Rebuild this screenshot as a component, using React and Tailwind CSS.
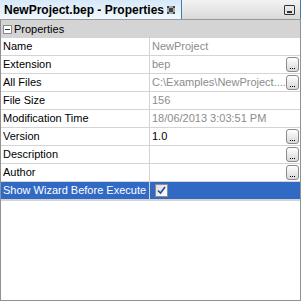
import React from 'react';

const rows = [
  { label: 'Name', value: 'NewProject', muted: true },
  { label: 'Extension', value: 'bep', muted: true, button: true },
  { label: 'All Files', value: 'C:\\Examples\\NewProject....', muted: true, button: true },
  { label: 'File Size', value: '156', muted: true },
  { label: 'Modification Time', value: '18/06/2013 3:03:51 PM', muted: true },
  { label: 'Version', value: '1.0', button: true },
  { label: 'Description', value: '', button: true },
  { label: 'Author', value: '', button: true },
  { label: 'Show Wizard Before Execute', check: true, selected: true },
];

const font = { fontFamily: "'Liberation Sans', Arial, sans-serif" };

function EllipsisButton() {
  return (
    <div className="w-[13px] h-[15px] rounded-[3px] border border-[#8a8a8a] bg-gradient-to-b from-white to-[#d8d8d8] flex items-end justify-center pb-[2px] shrink-0">
      <div className="flex gap-[1px]">
        <span className="w-[1px] h-[1px] bg-black" />
        <span className="w-[1px] h-[1px] bg-black" />
        <span className="w-[1px] h-[1px] bg-black" />
      </div>
    </div>
  );
}

function CheckBox() {
  return (
    <div className="w-[13px] h-[13px] border border-[#8d8d8d] bg-gradient-to-br from-[#dcdcdc] to-white flex items-center justify-center">
      <svg width="9" height="9" viewBox="0 0 9 9">
        <path d="M1 4.5 L3.5 7 L8 1" fill="none" stroke="#2547a8" strokeWidth="1.6" />
      </svg>
    </div>
  );
}

export default function App() {
  return (
    <div className="w-[301px] h-[301px] flex flex-col bg-white text-[11px] overflow-hidden" style={font}>
      {/* tab strip */}
      <div className="h-[20px] flex shrink-0 border-b border-[#9a9a9a]">
        <div className="w-[182px] flex items-center pl-[4px] pr-[6px] border-r border-[#3c7fb1] bg-gradient-to-b from-[#d6e8f8] to-[#f2f8fd]">
          <span className="text-[12px] font-bold text-black leading-none">NewProject.bep - Properties</span>
          <svg className="ml-auto" width="8" height="8" viewBox="0 0 8 8">
            <path d="M0 0h2v2H0zM6 0h2v2H6zM2 2h2v2H2zM4 2h2v2H4zM2 4h2v2H2zM4 4h2v2H4zM0 6h2v2H0zM6 6h2v2H6z" fill="#444" />
            <path d="M2 0h2v2H2zM4 0h2v2H4zM0 2h2v2H0zM6 2h2v2H6zM0 4h2v2H0zM6 4h2v2H6zM2 6h2v2H2zM4 6h2v2H4z" fill="#aaa" />
          </svg>
        </div>
        <div className="flex-1 flex items-center justify-end pr-[5px] border-r border-[#3c7fb1] bg-gradient-to-b from-[#f3f3f3] to-[#d9d9d9]">
          <div className="w-[11px] h-[10px] border border-[#333] rounded-[1px] flex items-end justify-center pb-[1px]">
            <span className="w-[5px] h-[2px] bg-[#333]" />
          </div>
        </div>
      </div>

      {/* grid */}
      <div className="flex-1 flex flex-col border-l border-r border-b border-[#8e9196]">
        <div className="h-[18px] flex items-center gap-[2px] pl-[2px] bg-[#d4d4d4] shrink-0">
          <div className="w-[9px] h-[9px] border border-[#8a8a8a] bg-white flex items-center justify-center">
            <span className="w-[5px] h-[1px] bg-[#333]" />
          </div>
          <span className="text-black">Properties</span>
        </div>
        {rows.map((r) => (
          <div
            key={r.label}
            className={`h-[18px] flex shrink-0 border-b border-[#d4d4d4] ${r.selected ? 'bg-[#316ac5]' : ''}`}
          >
            <div className={`w-[149px] flex items-center pl-[2px] border-r border-[#d4d4d4] ${r.selected ? 'text-white' : 'text-black'}`}>
              {r.label}
            </div>
            <div className="flex-1 flex items-center pl-[2px] pr-[1px]">
              {r.check ? (
                <div className="pl-[3px]"><CheckBox /></div>
              ) : (
                <span className={`flex-1 whitespace-nowrap overflow-hidden ${r.muted ? 'text-[#8c8c8c]' : 'text-black'}`}>{r.value}</span>
              )}
              {r.button && <EllipsisButton />}
            </div>
          </div>
        ))}
        <div className="flex-1 border-t border-[#d4d4d4]" />
      </div>
    </div>
  );
}
